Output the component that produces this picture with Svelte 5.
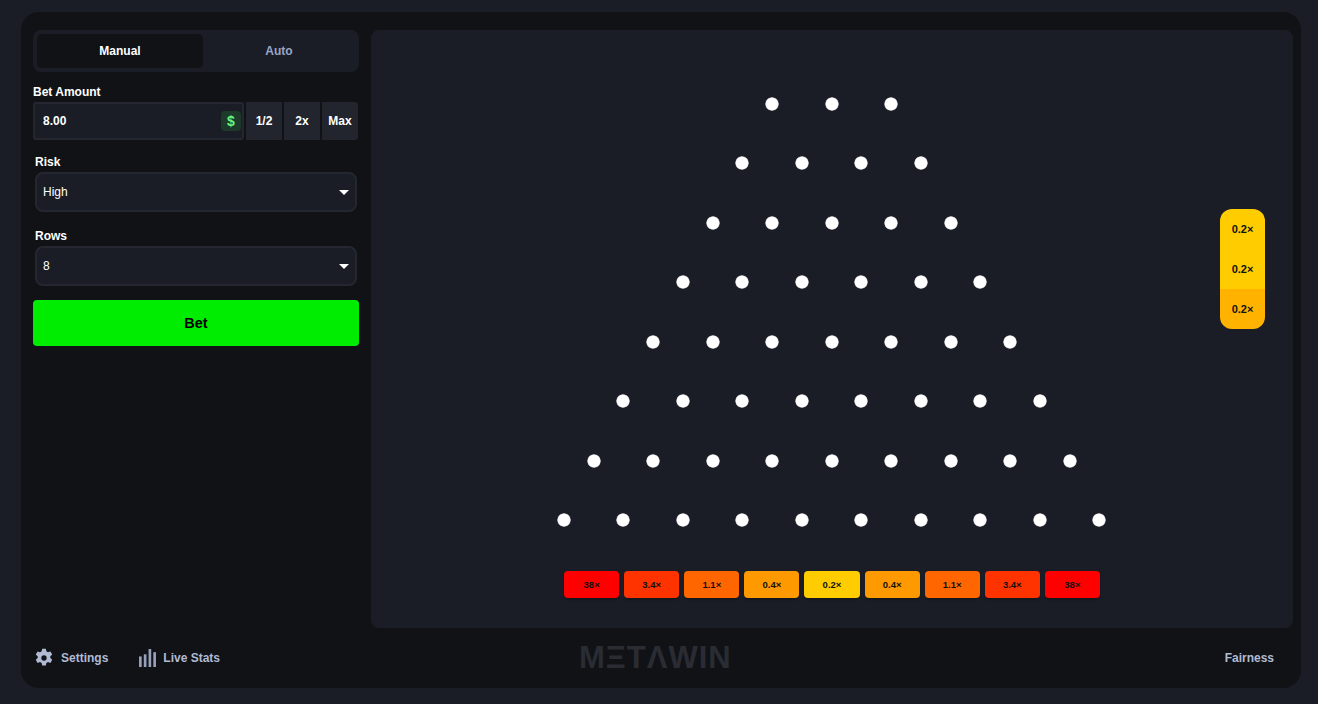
<script>
  // peg rows run from 3 pegs at the top to 10 at the bottom
  const rows = [3, 4, 5, 6, 7, 8, 9, 10];
  const slots = [
    { label: '38×', color: '#ff0000' },
    { label: '3.4×', color: '#ff3300' },
    { label: '1.1×', color: '#ff6600' },
    { label: '0.4×', color: '#ff9900' },
    { label: '0.2×', color: '#ffcc00' },
    { label: '0.4×', color: '#ff9900' },
    { label: '1.1×', color: '#ff6600' },
    { label: '3.4×', color: '#ff3300' },
    { label: '38×', color: '#ff0000' }
  ];
  const history = [
    { label: '0.2×', color: '#ffcc00' },
    { label: '0.2×', color: '#ffcc00' },
    { label: '0.2×', color: '#ffb300' }
  ];
</script>

<div class="shell">
  <div class="main">
    <aside class="panel">
      <div class="tabs">
        <button class="tab active">Manual</button>
        <button class="tab">Auto</button>
      </div>

      <div class="label bet-label">Bet Amount</div>
      <div class="bet-row">
        <div class="bet-input">
          <input value="8.00" />
          <span class="coin">$</span>
        </div>
        <button class="quick">1/2</button>
        <button class="quick">2x</button>
        <button class="quick">Max</button>
      </div>

      <div class="field">
        <div class="label">Risk</div>
        <div class="select">
          <select>
            <option>High</option>
            <option>Medium</option>
            <option>Low</option>
          </select>
          <span class="caret"></span>
        </div>
      </div>

      <div class="field">
        <div class="label">Rows</div>
        <div class="select">
          <select>
            <option>8</option>
            <option>12</option>
            <option>16</option>
          </select>
          <span class="caret"></span>
        </div>
      </div>

      <button class="bet">Bet</button>
    </aside>

    <section class="board">
      <div class="pegs">
        {#each rows as count}
          <div class="peg-row">
            {#each Array(count) as _}
              <span class="peg"></span>
            {/each}
          </div>
        {/each}
      </div>

      <div class="slots">
        {#each slots as slot}
          <div class="slot" style="background: {slot.color}">{slot.label}</div>
        {/each}
      </div>

      <div class="history">
        {#each history as item}
          <div class="history-item" style="background: {item.color}">{item.label}</div>
        {/each}
      </div>
    </section>
  </div>

  <footer class="footer">
    <div class="footer-left">
      <span class="foot-link">
        <svg class="gear" viewBox="0 0 24 24" aria-hidden="true">
          <path
            fill-rule="evenodd"
            d="M9.800 1h4.400l.6 3 2 1.100 2.900-1 2.200 3.800-2.300 2v2.200l2.300 2-2.200 3.800-2.900-1-2 1.100-.6 3H9.800l-.6-3-2-1.100-2.900 1-2.200-3.800 2.300-2v-2.200l-2.300-2 2.200-3.800 2.900 1 2-1.100zM12 8.800a3.200 3.200 0 1 0 0 6.400 3.200 3.200 0 0 0 0-6.400z"
          />
        </svg>
        Settings
      </span>
      <span class="foot-link stats">
        <svg class="bars" viewBox="0 0 16 17" aria-hidden="true">
          <rect x="0" y="7" width="2.500" height="10" />
          <rect x="4.500" y="5" width="2.500" height="12" />
          <rect x="9" y="0" width="2.500" height="17" />
          <rect x="13.500" y="3" width="2.500" height="14" />
        </svg>
        Live Stats
      </span>
    </div>
    <div class="logo">MΞTΛWIN</div>
    <span class="foot-link fairness">Fairness</span>
  </footer>
</div>

<style>
  :global(body) {
    margin: 0;
    background: #1a1d26;
    font-family: "Liberation Sans", Arial, sans-serif;
    overflow: hidden;
  }

  button,
  input,
  select {
    font-family: inherit;
    color: #fff;
    border: 0;
    outline: 0;
  }

  .shell {
    box-sizing: border-box;
    height: 676px;
    margin: 12px 17px 16px 21px;
    padding: 18px 8px 0 12px;
    background: #101216;
    border-radius: 18px;
    display: flex;
    flex-direction: column;
  }

  .main {
    height: 598px;
    display: grid;
    grid-template-columns: 326px 1fr;
    gap: 12px;
  }

  .panel {
    display: flex;
    flex-direction: column;
  }

  .tabs {
    display: grid;
    grid-template-columns: 166px 1fr;
    height: 42px;
    box-sizing: border-box;
    padding: 4px;
    background: #1a1d26;
    border-radius: 8px;
  }

  .tab {
    background: transparent;
    color: #9ba6c7;
    font-size: 12px;
    font-weight: 700;
    border-radius: 5px;
    padding: 0;
  }

  .tab.active {
    background: #101216;
    color: #fff;
  }

  .label {
    color: #fff;
    font-size: 12px;
    font-weight: 700;
    line-height: 16px;
  }

  .bet-label {
    margin-top: 12px;
    height: 18px;
  }

  .bet-row {
    display: flex;
    height: 38px;
  }

  .bet-input {
    box-sizing: border-box;
    width: 211px;
    margin-right: 2px;
    border: 2px solid #24272f;
    border-radius: 3px;
    background: #1a1d26;
    display: flex;
    align-items: center;
    padding: 0 1px 0 8px;
  }

  .bet-input input {
    flex: 1;
    min-width: 0;
    background: transparent;
    padding: 0;
    font-size: 12px;
    font-weight: 700;
  }

  .coin {
    width: 20px;
    height: 20px;
    border-radius: 4px;
    background: #1d3a2b;
    color: #6bf57c;
    font-size: 14px;
    font-weight: 700;
    line-height: 20px;
    text-align: center;
  }

  .quick {
    width: 36px;
    margin-right: 2px;
    padding: 0;
    background: #22252e;
    font-size: 12px;
    font-weight: 700;
  }

  .quick:last-child {
    margin-right: 0;
    border-radius: 0 3px 3px 0;
  }

  .field {
    margin: 14px 2px 0;
  }

  .field + .field {
    margin-top: 16px;
  }

  .select {
    position: relative;
    margin-top: 2px;
  }

  .select select {
    appearance: none;
    box-sizing: border-box;
    width: 100%;
    height: 40px;
    padding: 0 6px;
    background: #1a1d26;
    border: 2px solid #24272f;
    border-radius: 8px;
    font-size: 12px;
  }

  .caret {
    position: absolute;
    right: 8px;
    top: 18px;
    border-left: 5px solid transparent;
    border-right: 5px solid transparent;
    border-top: 5px solid #fff;
  }

  .bet {
    margin-top: 14px;
    height: 46px;
    background: #00ec00;
    color: #000;
    font-size: 14.500px;
    font-weight: 700;
    border-radius: 4px;
    padding: 0;
  }

  .board {
    position: relative;
    background: #1a1d26;
    border-radius: 8px;
    display: flex;
    flex-direction: column;
    align-items: center;
    padding-top: 66.600px;
    box-sizing: border-box;
  }

  .pegs {
    display: flex;
    flex-direction: column;
    align-items: center;
    gap: 45.500px;
    margin-left: -0.600px;
  }

  .peg-row {
    display: flex;
    gap: 45.500px;
  }

  .peg {
    width: 14px;
    height: 14px;
    border-radius: 50%;
    background: radial-gradient(circle closest-side, #fff 82%, rgba(255, 255, 255, 0.75) 92%, rgba(255, 255, 255, 0.15) 100%);
  }

  .slots {
    margin-top: 43.900px;
    display: grid;
    grid-template-columns: repeat(9, 55.100px);
    gap: 5px;
  }

  .slot {
    height: 27px;
    border-radius: 4px;
    box-shadow: 0 2px 2px rgba(0, 0, 0, 0.25);
    color: #111;
    font-size: 9.500px;
    font-weight: 700;
    line-height: 27px;
    text-align: center;
  }

  .history {
    position: absolute;
    right: 28px;
    top: 179px;
    width: 45px;
    border-radius: 12px;
    overflow: hidden;
  }

  .history-item {
    height: 40px;
    color: #111;
    font-size: 11px;
    font-weight: 700;
    line-height: 40px;
    text-align: center;
  }

  .footer {
    position: relative;
    flex: 1;
    display: flex;
    align-items: center;
    justify-content: space-between;
    padding: 0 19px 0 1px;
  }

  .footer-left {
    display: flex;
    align-items: center;
    gap: 31px;
  }

  .foot-link {
    display: flex;
    align-items: center;
    gap: 7px;
    color: #b1bad3;
    font-size: 12px;
    font-weight: 700;
  }

  .gear {
    width: 20px;
    height: 20px;
    fill: #b1bad3;
  }

  .bars {
    width: 17px;
    height: 18px;
    fill: #98a1bc;
  }

  .logo {
    position: absolute;
    left: 546px;
    top: 14px;
    color: #2a2c33;
    font-size: 31px;
    font-weight: 700;
    line-height: 32px;
    letter-spacing: 1px;
  }
</style>
